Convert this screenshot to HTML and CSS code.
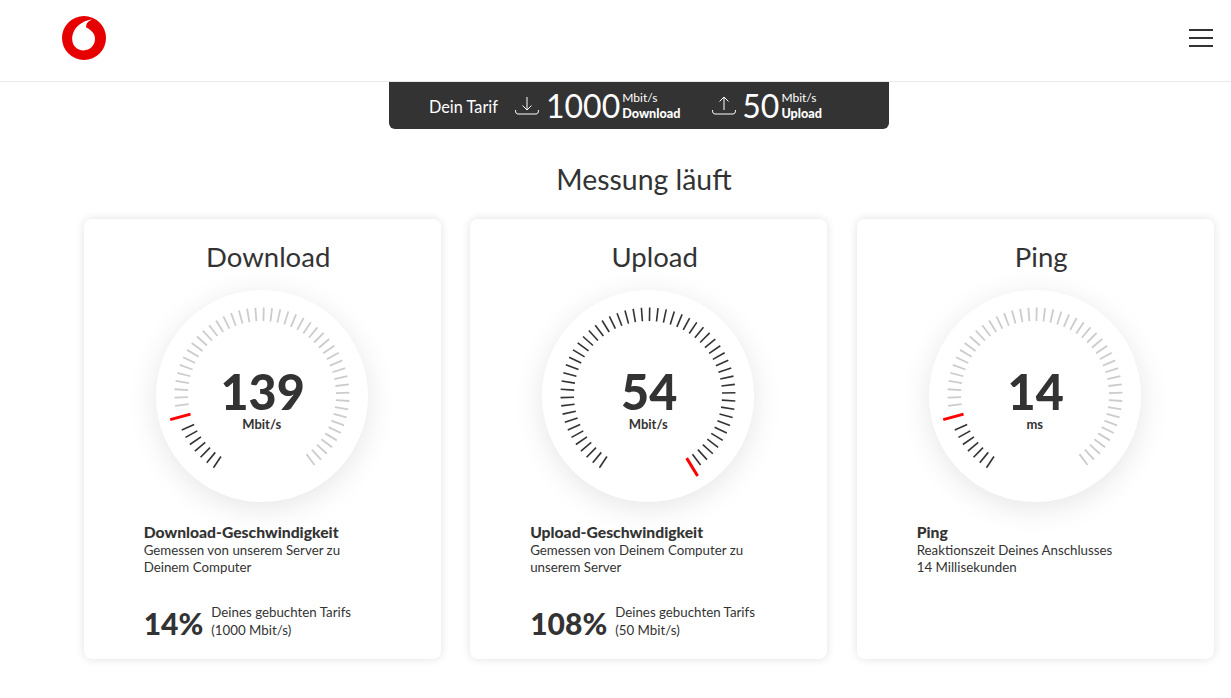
FILE: index.html
```html
<!DOCTYPE html>
<html lang="en">

<head>
  <meta charset="UTF-8">
  <meta name="viewport" content="width=device-width, initial-scale=1.0">
  <title>Speedtest</title>
  <link rel="stylesheet" href="styles.css">
</head>

<body>

  <header class="top-bar">
    <svg class="logo" viewBox="0 0 44 44" width="44" height="44">
      <circle cx="22" cy="22" r="22" fill="#e60000"/>
      <path d="M30.6 3.4 C20 4.2 10.2 12 10.2 23 C10.2 30 15.4 34.4 21.6 34.4 C28 34.4 33 29.4 33 22.8 C33 17 28.4 13.6 24.2 11.6 C23.6 7.6 26.4 4.6 30.6 3.4 Z" fill="#fff"/>
    </svg>
    <button class="menu-btn"><span></span><span></span><span></span></button>
  </header>

  <div class="tariff">
    <span class="tariff-label">Dein Tarif</span>
    <svg class="tariff-icon" viewBox="0 0 24 20" width="24" height="20">
      <path d="M0.5 14 C0.5 17 1.5 18 3 18 H21 C22.5 18 23.5 17 23.5 14 M12 1 V14 M7.5 9.5 L12 14 L16.5 9.5" fill="none" stroke="#fff" stroke-width="1"/>
    </svg>
    <span class="tariff-value">1000</span>
    <span class="tariff-unit">Mbit/s<b>Download</b></span>
    <svg class="tariff-icon second" viewBox="0 0 24 20" width="24" height="20">
      <path d="M0.5 14 C0.5 17 1.5 18 3 18 H21 C22.5 18 23.5 17 23.5 14 M12 14 V1 M7.5 5.5 L12 1 L16.5 5.5" fill="none" stroke="#fff" stroke-width="1"/>
    </svg>
    <span class="tariff-value">50</span>
    <span class="tariff-unit">Mbit/s<b>Upload</b></span>
  </div>

  <h1 class="page-title">Messung läuft</h1>

  <main class="cards">

    <section class="card">
      <h2 class="card-title">Download</h2>
      <div class="gauge" data-needle="-105">
        <div class="gauge-text"><span class="gauge-value">139</span><span class="gauge-unit">Mbit/s</span></div>
      </div>
      <div class="info">
        <h3>Download-Geschwindigkeit</h3>
        <p>Gemessen von unserem Server zu<br>Deinem Computer</p>
      </div>
      <div class="percent">
        <strong>14%</strong>
        <span>Deines gebuchten Tarifs<br>(1000 Mbit/s)</span>
      </div>
    </section>

    <section class="card">
      <h2 class="card-title">Upload</h2>
      <div class="gauge" data-needle="148.5">
        <div class="gauge-text"><span class="gauge-value">54</span><span class="gauge-unit">Mbit/s</span></div>
      </div>
      <div class="info">
        <h3>Upload-Geschwindigkeit</h3>
        <p>Gemessen von Deinem Computer zu<br>unserem Server</p>
      </div>
      <div class="percent">
        <strong>108%</strong>
        <span>Deines gebuchten Tarifs<br>(50 Mbit/s)</span>
      </div>
    </section>

    <section class="card">
      <h2 class="card-title">Ping</h2>
      <div class="gauge" data-needle="-105">
        <div class="gauge-text"><span class="gauge-value">14</span><span class="gauge-unit">ms</span></div>
      </div>
      <div class="info">
        <h3>Ping</h3>
        <p>Reaktionszeit Deines Anschlusses<br>14 Millisekunden</p>
      </div>
    </section>

  </main>

  <script src="gauge.js"></script>

</body>

</html>
```

FILE: styles.css
```css
*
    {
    margin: 0;
    padding: 0;
    box-sizing: border-box;
    }

:root
    {
    --drk: #333333;
    --lin: #e9e9e9;
    }

body
    {
    width: 1231px;
    height: 698px;
    overflow: hidden;
    background-color: #ffffff;
    font-family: Lato, "Open Sans", sans-serif;
    color: var(--drk);
    }

.top-bar
    {
    display: flex;
    justify-content: space-between;
    align-items: center;
    height: 82px;
    padding: 0 18px 6px 62px;
    border-bottom: 1px solid var(--lin);
    }

.menu-btn
    {
    display: flex;
    flex-direction: column;
    gap: 6px;
    width: 24px;
    background: none;
    border: none;
    }

.menu-btn span
    {
    height: 2px;
    background-color: var(--drk);
    }

.tariff
    {
    display: flex;
    align-items: center;
    width: 500px;
    height: 47px;
    margin-left: 389px;
    padding-left: 40px;
    background-color: var(--drk);
    border-radius: 0 0 6px 6px;
    color: #ffffff;
    }

.tariff-label
    {
    width: 86px;
    padding-top: 2px;
    font-size: 16.3px;
    }

.tariff-icon
    {
    flex: none;
    margin-right: 7px;
    }

.tariff-icon.second
    {
    margin-left: 30px;
    margin-right: 6px;
    }

.tariff-value
    {
    font-size: 32px;
    font-weight: 400;
    line-height: 47px;
    margin-right: 2px;
    }

.tariff-unit
    {
    display: flex;
    flex-direction: column;
    font-size: 12px;
    line-height: 16px;
    width: 60px;
    }

.tariff-unit b
    {
    font-size: 12.6px;
    font-weight: 900;
    }

.page-title
    {
    margin: 30px 0 20px 57px;
    font-size: 28.4px;
    line-height: 40px;
    font-weight: 400;
    text-align: center;
    }

.cards
    {
    display: flex;
    gap: 29.5px;
    margin-left: 83.7px;
    }

.card
    {
    flex: none;
    width: 357px;
    height: 440px;
    padding: 19px 0 0 60px;
    background-color: #ffffff;
    border-radius: 8px;
    box-shadow: 0 0 10px rgba(0, 0, 0, 0.12);
    }

.card-title
    {
    margin-left: -48px;
    font-size: 27.5px;
    line-height: 38px;
    font-weight: 400;
    text-align: center;
    }

.gauge
    {
    position: relative;
    display: flex;
    justify-content: center;
    width: 212px;
    height: 212px;
    margin: 14px 0 21px 12px;
    border-radius: 50%;
    background-color: #ffffff;
    box-shadow: 0 6px 30px rgba(0, 0, 0, 0.1);
    }

.gauge svg
    {
    position: absolute;
    top: 0;
    left: 0;
    }

.gauge-text
    {
    display: flex;
    flex-direction: column;
    align-items: center;
    padding-top: 75px;
    }

.gauge-value
    {
    margin-left: 2px;
    font-size: 48.5px;
    line-height: 52px;
    font-weight: 900;
    }

.gauge-unit
    {
    font-size: 13px;
    line-height: 14px;
    font-weight: 700;
    }

.info h3
    {
    font-size: 15.7px;
    line-height: 19px;
    font-weight: 900;
    }

.info p
    {
    font-size: 13.3px;
    line-height: 17px;
    }

.percent
    {
    display: flex;
    align-items: center;
    gap: 8px;
    margin-top: 25px;
    }

.percent strong
    {
    margin-top: 4px;
    font-size: 30px;
    font-weight: 900;
    }

.percent span
    {
    font-size: 13.3px;
    line-height: 18px;
    }
```

FILE: gauge.js
```js
// draws the tick ring and the red needle of every gauge
const SVG_NS = 'http://www.w3.org/2000/svg';
const START_ANGLE = -146.3;
const STEP = 5.46;
const TICK_COUNT = 54;

function addLine(svg, angle, inner, outer, color, width)
{
const line = document.createElementNS(SVG_NS, 'line');
line.setAttribute('x1', 106);
line.setAttribute('x2', 106);
line.setAttribute('y1', 105 - inner);
line.setAttribute('y2', 105 - outer);
line.setAttribute('stroke', color);
line.setAttribute('stroke-width', width);
line.setAttribute('transform', `rotate(${angle} 106 105)`);
svg.appendChild(line);
}

document.querySelectorAll('.gauge').forEach((gauge) =>
{
const svg = document.createElementNS(SVG_NS, 'svg');
svg.setAttribute('width', 212);
svg.setAttribute('height', 212);

const needle = Number(gauge.dataset.needle);

for (let i = 0; i < TICK_COUNT; i++)
{
const angle = START_ANGLE + i * STEP;
if (Math.abs(angle - needle) < 4) continue;
if (angle < needle) addLine(svg, angle, 74, 87.5, '#333333', 1.6);
else addLine(svg, angle, 74, 87.5, '#cccccc', 1.8);
}

addLine(svg, needle, 74, 95, '#ff0000', 3);
gauge.prepend(svg);
});
```
